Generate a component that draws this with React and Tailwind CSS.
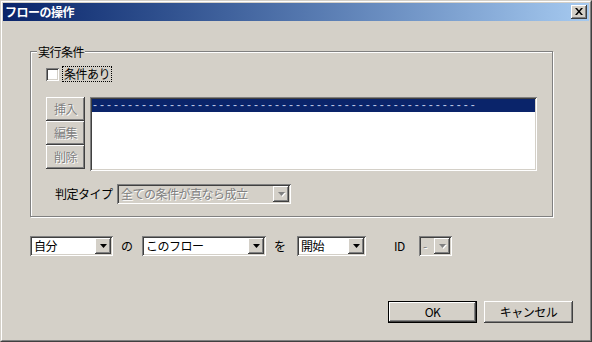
import React from 'react';

const raised =
  'shadow-[inset_-1px_-1px_#404040,inset_1px_1px_#ffffff,inset_-2px_-2px_#808080,inset_2px_2px_#d4d0c8]';
const sunken =
  'shadow-[inset_1px_1px_#808080,inset_-1px_-1px_#ffffff,inset_2px_2px_#404040,inset_-2px_-2px_#d4d0c8]';
const grayText = 'text-[#808080] [text-shadow:1px_1px_0_#ffffff]';

const Arrow = ({ disabled }) => (
  <div className={`flex h-[16px] w-[16px] shrink-0 items-center justify-center bg-[#d4d0c8] ${raised}`}>
    <svg width="8" height="5" viewBox="0 0 8 5" className="ml-[1px] mt-[1px]">
      {disabled && <path d="M1 1h7l-3.5 4z" fill="#ffffff" />}
      <path d="M0 0h7l-3.5 4z" fill={disabled ? '#808080' : '#000000'} />
    </svg>
  </div>
);

const Combo = ({ className, text, disabled }) => (
  <div
    className={`flex h-[20px] items-center p-[2px] ${sunken} ${disabled ? 'bg-[#d4d0c8]' : 'bg-white'} ${className}`}
  >
    <span className={`min-w-0 flex-1 whitespace-nowrap pl-[2px] text-[12px] leading-[16px] ${disabled ? grayText : 'text-black'}`}>
      {text}
    </span>
    <Arrow disabled={disabled} />
  </div>
);

const SideButton = ({ label }) => (
  <div className={`flex h-[24px] w-[39px] items-center justify-center bg-[#d4d0c8] text-[12px] ${raised} ${grayText}`}>
    {label}
  </div>
);

const PushButton = ({ label, isDefault }) => (
  <div className={`h-[22px] w-[89px] ${isDefault ? 'border border-black' : ''}`}>
    <div className={`flex h-full w-full items-center justify-center bg-[#d4d0c8] text-[12px] text-black ${raised}`}>
      {label}
    </div>
  </div>
);

export default function App() {
  return (
    <div className="h-[342px] w-[592px] border border-t-[#d4d0c8] border-l-[#d4d0c8] border-r-[#404040] border-b-[#404040] bg-[#d4d0c8] font-['MS_UI_Gothic','Noto_Sans_CJK_JP',sans-serif] tracking-[-0.5px]">
      <div className="flex h-full w-full flex-col border border-t-white border-l-white border-r-[#808080] border-b-[#808080] p-[1px]">
        {/* title bar */}
        <div className="flex h-[18px] items-center justify-between bg-gradient-to-r from-[#0a246a] to-[#a6caf0] pl-[2px] pr-[2px]">
          <span className="text-[12px] font-bold leading-[16px] text-white">フローの操作</span>
          <div className={`flex h-[14px] w-[16px] items-center justify-center bg-[#d4d0c8] ${raised}`}>
            <svg width="8" height="7" viewBox="0 0 8 7" className="-mt-[1px]">
              <path d="M0 0h2l2 2.5L6 0h2L5 3.5 8 7H6L4 4.5 2 7H0l3-3.5z" fill="#000000" />
            </svg>
          </div>
        </div>

        {/* body */}
        <div className="flex flex-col pl-[27px]">
          {/* group box */}
          <div className="relative mt-[30px] h-[166px] w-[523px] border border-[#808080] shadow-[1px_1px_0_#ffffff,inset_1px_1px_0_#ffffff]">
            <span className="absolute left-[6px] top-[-8px] bg-[#d4d0c8] px-[1px] text-[12px] leading-[15px] text-black">
              実行条件
            </span>

            <div className="ml-[15px] mt-[14px] flex items-center">
              <div className={`h-[13px] w-[13px] bg-white ${sunken}`} />
              <span className="ml-[3px] border border-dotted border-black px-[1px] text-[12px] leading-[14px] text-black">
                条件あり
              </span>
            </div>

            <div className="ml-[15px] mt-[15px] flex items-start gap-[5px]">
              <div className="flex flex-col">
                <SideButton label="挿入" />
                <SideButton label="編集" />
                <SideButton label="削除" />
              </div>
              <div className={`h-[74px] w-[447px] bg-white p-[2px] ${sunken}`}>
                <div className="flex h-[13px] items-center overflow-hidden bg-[#0a246a] pl-[1px]">
                  <span className="font-['Liberation_Sans',sans-serif] text-[12px] leading-[13px] tracking-[3px] text-[#b8c4e4]">
                    -------------------------------------------------------
                  </span>
                </div>
              </div>
            </div>

            <div className="ml-[24px] mt-[13px] flex items-center">
              <span className="w-[62px] text-[12px] text-black">判定タイプ</span>
              <Combo className="w-[174px]" text="全ての条件が真なら成立" disabled />
            </div>
          </div>

          {/* target row */}
          <div className="mt-[19px] flex items-center">
            <Combo className="w-[83px]" text="自分" />
            <span className="ml-[8px] w-[21px] text-[12px] text-black">の</span>
            <Combo className="w-[124px]" text="このフロー" />
            <span className="ml-[8px] w-[23px] text-[12px] text-black">を</span>
            <Combo className="w-[69px]" text="開始" />
            <span className="ml-[28px] w-[25px] text-[12px] text-black">ID</span>
            <Combo className="w-[33px]" text="-" disabled />
          </div>

          {/* dialog buttons */}
          <div className="mt-[45px] flex gap-[7px] pl-[358px]">
            <PushButton label="OK" isDefault />
            <PushButton label="キャンセル" />
          </div>
        </div>
      </div>
    </div>
  );
}
